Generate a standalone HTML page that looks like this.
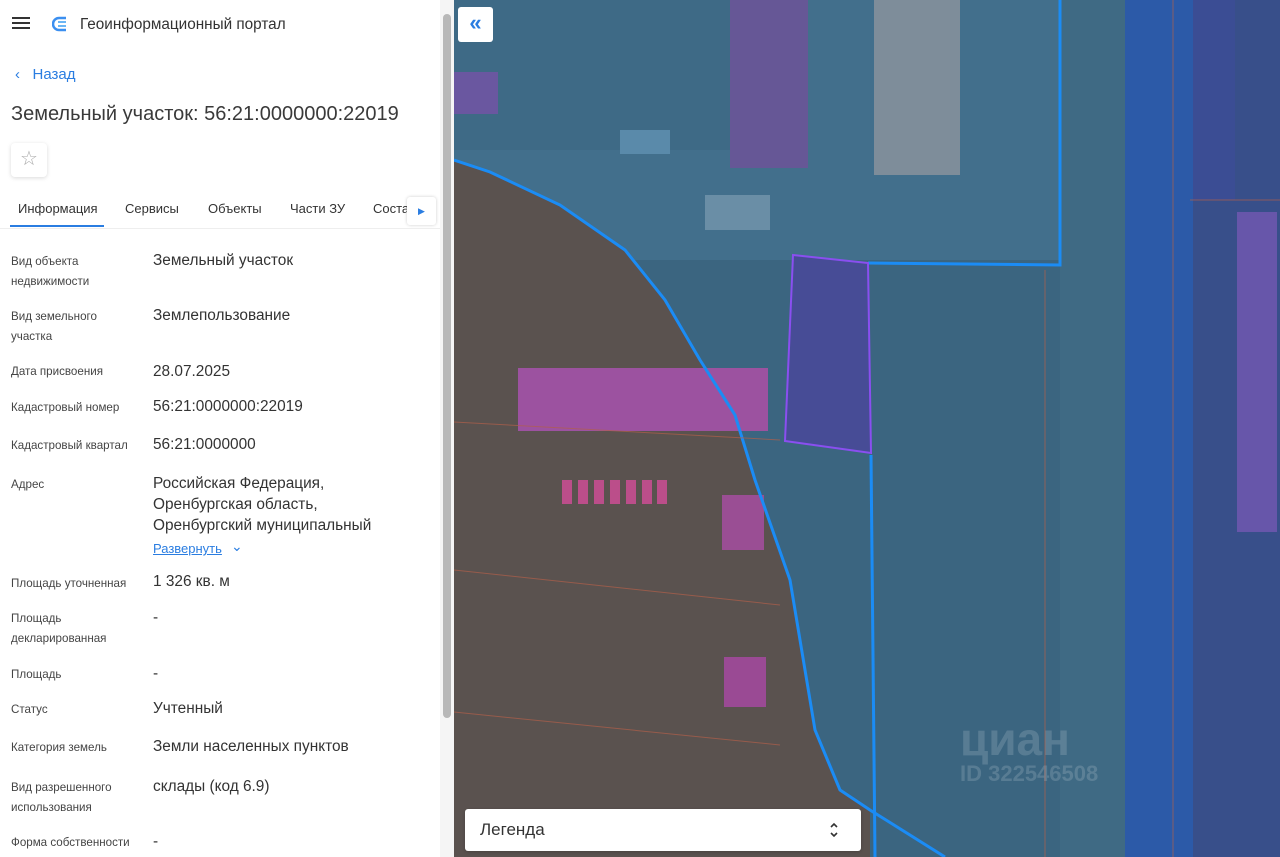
<!DOCTYPE html>
<html><head><meta charset="utf-8"><style>
*{margin:0;padding:0;box-sizing:border-box}
body{width:1280px;height:857px;overflow:hidden;font-family:"Liberation Sans",sans-serif;background:#fff;position:relative;color:#333}
.a{position:absolute;white-space:nowrap}
.l{font-size:11.6px;color:#444;line-height:20px;left:11px}
.v{font-size:15.4px;color:#333;left:153px;line-height:22px}
</style></head><body>
<div class="a" style="left:12px;top:17px;width:18px;height:2px;background:#333;box-shadow:0 5px 0 #333,0 10px 0 #333"></div>
<svg class="a" style="left:52px;top:15px" width="18" height="18" viewBox="0 0 18 18"><path d="M14 3H7a5 5 0 0 0 0 12h7" fill="none" stroke="#3b8ff0" stroke-width="2.5"/><path d="M6 7h8M6 11h8" stroke="#6bb6f5" stroke-width="2"/></svg>
<div class="a" style="left:80px;top:16px;font-size:15.3px;color:#333">Геоинформационный портал</div>
<div class="a" style="left:15px;top:66px;font-size:15px;color:#2a7de1">&#8249;&nbsp;&nbsp;&nbsp;Назад</div>
<div class="a" style="left:11px;top:103px;font-size:20px;color:#3a3a3a">Земельный участок: 56:21:0000000:22019</div>
<div class="a" style="left:11px;top:143px;width:36px;height:34px;border-radius:4px;box-shadow:0 1px 4px rgba(0,0,0,.15);font-size:20px;color:#aaa;text-align:center;line-height:33px">☆</div>
<div class="a" style="left:18px;top:201px;font-size:13px;color:#333">Информация</div>
<div class="a" style="left:125px;top:201px;font-size:13px;color:#333">Сервисы</div>
<div class="a" style="left:208px;top:201px;font-size:13px;color:#333">Объекты</div>
<div class="a" style="left:290px;top:201px;font-size:13px;color:#333">Части ЗУ</div>
<div class="a" style="left:373px;top:201px;font-size:13px;color:#333">Соста</div>
<div class="a" style="left:407px;top:197px;width:29px;height:28px;background:#fff;box-shadow:0 0 3px rgba(0,0,0,.2);border-radius:3px;color:#2a7de1;font-size:9px;text-align:center;line-height:28px">▶</div>
<div class="a" style="left:10px;top:225px;width:94px;height:2px;background:#2a7de1"></div>
<div class="a" style="left:0;top:228px;width:440px;height:1px;background:#eee"></div>
<div class="a l" style="top:252px">Вид объекта<br>недвижимости</div><div class="a v" style="top:250px">Земельный участок</div>
<div class="a l" style="top:307px">Вид земельного<br>участка</div><div class="a v" style="top:305px">Землепользование</div>
<div class="a l" style="top:362px">Дата присвоения</div><div class="a v" style="top:361px">28.07.2025</div>
<div class="a l" style="top:398px">Кадастровый номер</div><div class="a v" style="top:396px">56:21:0000000:22019</div>
<div class="a l" style="top:436px">Кадастровый квартал</div><div class="a v" style="top:434px">56:21:0000000</div>
<div class="a l" style="top:475px">Адрес</div><div class="a v" style="top:473px;line-height:21px">Российская Федерация,<br>Оренбургская область,<br>Оренбургский муниципальный</div>
<div class="a" style="left:153px;top:541px;font-size:13px;color:#2a7de1;text-decoration:underline">Развернуть</div><div class="a" style="left:231px;top:538px;font-size:14px;color:#2a7de1">⌄</div>
<div class="a l" style="top:574px">Площадь уточненная</div><div class="a v" style="top:571px">1 326 кв. м</div>
<div class="a l" style="top:609px">Площадь<br>декларированная</div><div class="a v" style="top:607px">-</div>
<div class="a l" style="top:665px">Площадь</div><div class="a v" style="top:663px">-</div>
<div class="a l" style="top:700px">Статус</div><div class="a v" style="top:698px">Учтенный</div>
<div class="a l" style="top:738px">Категория земель</div><div class="a v" style="top:736px">Земли населенных пунктов</div>
<div class="a l" style="top:778px">Вид разрешенного<br>использования</div><div class="a v" style="top:776px">склады (код 6.9)</div>
<div class="a l" style="top:833px">Форма собственности</div><div class="a v" style="top:831px">-</div>
<div class="a" style="left:440px;top:0;width:14px;height:857px;background:#f5f5f5"></div>
<div class="a" style="left:443px;top:14px;width:8px;height:704px;background:#b8b8b8;border-radius:4px"></div>
<svg class="a" style="left:454px;top:0" width="826" height="857" viewBox="454 0 826 857">
<rect x="454" y="0" width="826" height="857" fill="#3b6580"/>
<rect x="454" y="0" width="610" height="260" fill="#426f8c"/>
<rect x="454" y="0" width="340" height="150" fill="#3e6a86"/>
<path d="M454 160 L490 172 L560 205 L625 250 L665 300 L700 360 L735 415 L755 480 L790 580 L815 730 L840 790 L870 810 L870 857 L454 857Z" fill="#5a524f"/>
<rect x="1060" y="0" width="65" height="857" fill="#3f6a84"/>
<rect x="1125" y="0" width="68" height="857" fill="#2c5aa8"/>
<rect x="1193" y="0" width="87" height="857" fill="#384f8a"/>
<rect x="1193" y="0" width="42" height="200" fill="#3b4d94"/>
<rect x="1237" y="212" width="40" height="320" fill="#6756aa"/>
<rect x="730" y="0" width="78" height="168" fill="#665796"/>
<rect x="874" y="0" width="86" height="175" fill="#7e8d9a"/>
<rect x="454" y="72" width="44" height="42" fill="#6a57a0"/>
<rect x="620" y="130" width="50" height="24" fill="#5a8aaa"/>
<rect x="705" y="195" width="65" height="35" fill="#6a8ea6"/>
<rect x="518" y="368" width="250" height="63" fill="#9c52a0"/>
<rect x="722" y="495" width="42" height="55" fill="#9a4e94"/>
<rect x="724" y="657" width="42" height="50" fill="#9a4a94"/>
<g fill="#bb4e8a"><rect x="562" y="480" width="10" height="24"/><rect x="578" y="480" width="10" height="24"/><rect x="594" y="480" width="10" height="24"/><rect x="610" y="480" width="10" height="24"/><rect x="626" y="480" width="10" height="24"/><rect x="642" y="480" width="10" height="24"/><rect x="657" y="480" width="10" height="24"/></g>
<path d="M454 160 L490 172 L560 205 L625 250 L665 300 L700 360 L735 415 L755 480 L790 580 L815 730 L840 790 L870 810 L945 857" fill="none" stroke="#1b8cf5" stroke-width="3"/>
<path d="M868 263 L1060 265 L1060 0" fill="none" stroke="#1b8cf5" stroke-width="3"/>
<path d="M871 455 L875 857" fill="none" stroke="#1b8cf5" stroke-width="3"/>
<path d="M793 255 L868 263 L871 453 L785 441Z" fill="#474c96" stroke="#8a4ff0" stroke-width="2"/>
<g fill="none" stroke="#b0604a" stroke-width="1" opacity=".7"><path d="M454 422 L780 440"/><path d="M454 570 L780 605"/><path d="M454 712 L780 745"/><path d="M1173 0 V857"/><path d="M1045 270 V857"/><path d="M1190 200 H1280"/></g>
<text x="960" y="755" font-family="Liberation Sans" font-size="46" font-weight="bold" fill="#fff" opacity=".15">циан</text>
<text x="960" y="781" font-family="Liberation Sans" font-size="22" font-weight="bold" fill="#fff" opacity=".15">ID 322546508</text>
</svg>
<div class="a" style="left:458px;top:7px;width:35px;height:35px;background:#fff;border-radius:3px;color:#2a7de1;font-size:22px;font-weight:bold;text-align:center;line-height:31px">«</div>
<div class="a" style="left:465px;top:809px;width:396px;height:42px;background:#fff;border-radius:3px;box-shadow:0 1px 3px rgba(0,0,0,.2)"><span class="a" style="left:15px;top:11px;font-size:17px;color:#333">Легенда</span>
<svg class="a" style="left:364px;top:12px" width="10" height="18" viewBox="0 0 10 18"><path d="M2 6l3-3 3 3M2 12l3 3 3-3" fill="none" stroke="#333" stroke-width="1.6"/></svg></div>
</body></html>
